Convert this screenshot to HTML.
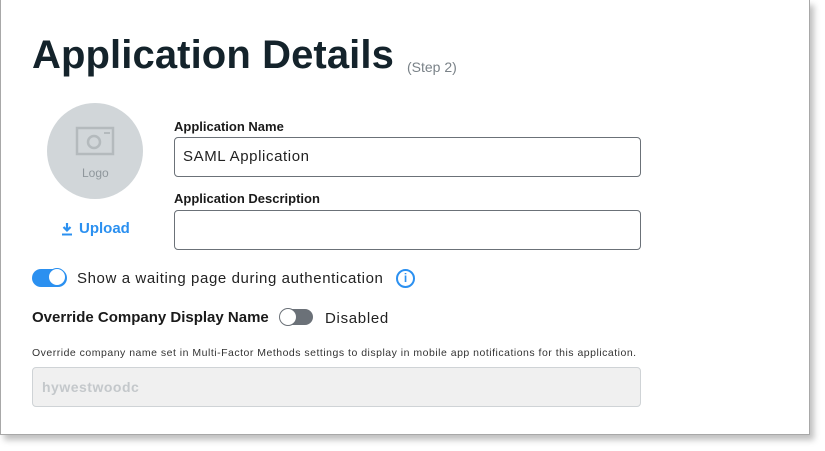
<!DOCTYPE html>
<html><head><style>
body{margin:0;width:825px;height:451px;background:#fff;font-family:"Liberation Sans",sans-serif;position:relative;overflow:hidden}
.frame{position:absolute;left:0;top:0;width:808px;height:434px;border:1px solid #a8a8a8;border-top:none;box-shadow:4px 5px 6px rgba(0,0,0,.25);background:#fff}
.a{position:absolute;white-space:nowrap}
.inp{position:absolute;border:1px solid #6b7178;border-radius:4px;background:#fff;box-sizing:border-box}
</style></head><body>
<div class="frame"></div>
<div class="a" style="left:32px;top:33px;font-size:40px;font-weight:bold;color:#14232b;letter-spacing:0.1px">Application Details</div>
<div class="a" style="left:407px;top:59px;font-size:14px;color:#7a8288">(Step 2)</div>
<div class="a" style="left:47px;top:103px;width:96px;height:96px;border-radius:50%;background:#d1d6d9"></div>
<svg class="a" style="left:75px;top:126px" width="40" height="30" viewBox="0 0 40 30"><rect x="2" y="2" width="36" height="26" fill="none" stroke="#b4babd" stroke-width="2.5"/><circle cx="19" cy="16" r="6" fill="none" stroke="#b4babd" stroke-width="2.5"/><line x1="29" y1="7" x2="35" y2="7" stroke="#b4babd" stroke-width="2"/></svg>
<div class="a" style="left:82px;top:166px;font-size:12px;color:#8f979c">Logo</div>
<svg class="a" style="left:61px;top:223px" width="12" height="13" viewBox="0 0 12 13"><path d="M6 0v7M2.5 4L6 7.5 9.5 4" stroke="#2b90f0" stroke-width="2.2" fill="none"/><rect x="1" y="10.5" width="10" height="2" fill="#2b90f0"/></svg>
<div class="a" style="left:79px;top:220px;font-size:15px;font-weight:bold;color:#2b90f0">Upload</div>
<div class="a" style="left:174px;top:119px;font-size:13px;font-weight:bold;color:#1a1a1a">Application Name</div>
<div class="inp" style="left:174px;top:137px;width:467px;height:40px"></div>
<div class="a" style="left:183px;top:148px;font-size:15px;color:#222;letter-spacing:0.6px">SAML Application</div>
<div class="a" style="left:174px;top:191px;font-size:13px;font-weight:bold;color:#1a1a1a">Application Description</div>
<div class="inp" style="left:174px;top:210px;width:467px;height:40px"></div>
<div class="a" style="left:32px;top:269px;width:35px;height:18px;border-radius:9px;background:#2b90f0"></div>
<div class="a" style="left:48px;top:268px;width:18px;height:18px;border-radius:50%;background:#fff;border:1px solid #2b90f0;box-sizing:border-box"></div>
<div class="a" style="left:77px;top:270px;font-size:15px;color:#222;letter-spacing:0.6px">Show a waiting page during authentication</div>
<div class="a" style="left:396px;top:269px;width:19px;height:19px;border-radius:50%;border:2px solid #2b90f0;box-sizing:border-box;color:#2b90f0;font-weight:bold;font-size:12px;text-align:center;line-height:15px">i</div>
<div class="a" style="left:32px;top:309px;font-size:15px;font-weight:bold;color:#1a1a1a">Override Company Display Name</div>
<div class="a" style="left:280px;top:309px;width:33px;height:16px;border-radius:8px;background:#6b7178"></div>
<div class="a" style="left:279px;top:308px;width:18px;height:18px;border-radius:50%;background:#fff;border:1px solid #6b7178;box-sizing:border-box"></div>
<div class="a" style="left:325px;top:310px;font-size:15px;color:#222;letter-spacing:0.7px">Disabled</div>
<div class="a" style="left:32px;top:347px;font-size:10.5px;color:#333;letter-spacing:0.5px">Override company name set in Multi-Factor Methods settings to display in mobile app notifications for this application.</div>
<div class="a" style="left:32px;top:367px;width:609px;height:40px;border:1px solid #cfd3d6;border-radius:4px;background:#f0f0f0;box-sizing:border-box"></div>
<div class="a" style="left:42px;top:379px;font-size:14px;font-weight:bold;color:#c4c8cb;letter-spacing:0.5px">hywestwoodc</div>
</body></html>
